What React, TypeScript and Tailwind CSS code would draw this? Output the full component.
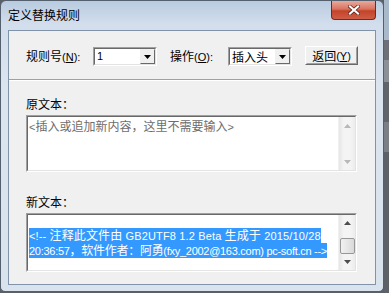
import React from "react";

const CJK = /([\u2e80-\u9fff\u3000-\u303f\uff00-\uffef]+)/;

function T({ s }: { s: string }) {
  return (
    <>
      {s.split(CJK).map((p, i) =>
        CJK.test(p) ? (
          <span key={i} className="text-[12px] font-['Noto_Sans_CJK_SC',sans-serif]">
            {p}
          </span>
        ) : (
          <React.Fragment key={i}>{p}</React.Fragment>
        )
      )}
    </>
  );
}

function Arrow({ up, color }: { up?: boolean; color: string }) {
  return (
    <svg width="7" height="4" viewBox="0 0 7 4">
      {up ? <polygon points="0,4 3.5,0 7,4" fill={color} /> : <polygon points="0,0 7,0 3.5,4" fill={color} />}
    </svg>
  );
}

function ScrollBar({ enabled, h }: { enabled: boolean; h: number }) {
  const c = enabled ? "#4d4d4d" : "#b8b8b8";
  return (
    <div className="w-[17px] shrink-0 flex flex-col items-center bg-[linear-gradient(90deg,#e6e6e6,#f4f4f4_30%,#f4f4f4_70%,#ececec)] border-l border-[#f0f0f0]" style={{ height: h }}>
      <div className="h-[17px] flex items-center justify-center">
        <Arrow up color={c} />
      </div>
      <div className="flex-1 w-full flex justify-center">
        {enabled && (
          <div className="w-[15px] h-[16px] mt-[6px] rounded-[2px] border border-[#979797] bg-[linear-gradient(90deg,#f1f1f1,#e6e6e6_50%,#d9d9d9)]" />
        )}
      </div>
      <div className="h-[17px] flex items-center justify-center">
        <Arrow color={c} />
      </div>
    </div>
  );
}

function Sunken({ className, children }: { className?: string; children: React.ReactNode }) {
  return (
    <div className={"border border-t-[#a0a0a0] border-l-[#a0a0a0] border-r-white border-b-white " + (className || "")}>
      <div className="w-full h-full border border-t-[#696969] border-l-[#696969] border-r-[#e3e3e3] border-b-[#e3e3e3] bg-white flex overflow-hidden">
        {children}
      </div>
    </div>
  );
}

function Combo({ text }: { text: string }) {
  return (
    <Sunken className="w-[64px] h-[19px]">
      <div className="flex-1 pl-[2px] leading-[15px] text-black">
        <T s={text} />
      </div>
      <div className="w-[15px] h-full border border-t-[#f0f0f0] border-l-[#f0f0f0] border-r-[#696969] border-b-[#696969] bg-[#f0f0f0] flex items-center justify-center">
        <Arrow color="#000" />
      </div>
    </Sunken>
  );
}

export default function App() {
  return (
    <div className="w-[389px] h-[293px] flex bg-[#5b6068] font-['Liberation_Sans','Noto_Sans_CJK_SC',sans-serif] text-[11px] text-black overflow-hidden">
      <div className="w-[384px] h-[292px] flex flex-col rounded-t-[6px] rounded-b-[5px] border border-[#55606e] bg-[linear-gradient(180deg,#b9cbe0_0%,#d2deec_8%,#dbe5f0_30%,#d9e3ee_100%)]">
        <div className="h-[29px] flex items-start justify-between pl-[7px] pr-[7px]">
          <div className="mt-[6px] text-[12px] leading-[16px] text-black font-['Noto_Sans_CJK_SC',sans-serif]">定义替换规则</div>
          <div className="w-[45px] h-[19px] rounded-b-[4px] border border-t-0 border-[#6b2b22] bg-[linear-gradient(180deg,#e9a99b_0%,#d8735f_45%,#c4432a_55%,#cf5d45_100%)] flex items-center justify-center">
            <svg width="12" height="10" viewBox="0 0 12 10">
              <path d="M2 1.5 L10 8.5 M10 1.5 L2 8.5" stroke="#5a1d14" strokeWidth="3.6" strokeLinecap="square" />
              <path d="M2 1.5 L10 8.5 M10 1.5 L2 8.5" stroke="#ffffff" strokeWidth="2.2" strokeLinecap="square" />
            </svg>
          </div>
        </div>
        <div className="ml-[7px] w-[368px] h-[255px] bg-[#f0f0f0] border border-[#8193a8] flex flex-col">
          <div className="h-[49px] border-b border-[#a0a0a0] flex items-center pl-[17px] pt-[3px]">
            <div className="w-[67px] leading-[14px]">
              <T s="规则号(" />
              <span className="underline">N</span>
              <T s="):" />
            </div>
            <Combo text="1" />
            <div className="ml-[13px] w-[58px] leading-[14px]">
              <T s="操作(" />
              <span className="underline">O</span>
              <T s="):" />
            </div>
            <Combo text="插入头" />
            <div className="ml-[13px] mb-[2px] w-[53px] h-[19px] border border-t-white border-l-white border-r-[#696969] border-b-[#696969]">
              <div className="w-full h-full border border-t-[#f0f0f0] border-l-[#f0f0f0] border-r-[#a0a0a0] border-b-[#a0a0a0] bg-[#f0f0f0] flex items-center justify-center leading-[14px]">
                <T s="返回(" />
                <span className="underline">Y</span>
                <T s=")" />
              </div>
            </div>
          </div>
          <div className="flex flex-col pl-[17px] border-t border-white">
            <div className="mt-[16px] leading-[14px]">
              <T s="原文本：" />
            </div>
            <Sunken className="mt-[3px] w-[331px] h-[57px]">
              <div className="flex-1 pl-[1px] pt-[2px] leading-[13px] text-[#6d6d6d]">
                <T s="<插入或追加新内容，这里不需要输入>" />
              </div>
              <ScrollBar enabled={false} h={53} />
            </Sunken>
            <div className="mt-[23px] leading-[14px]">
              <T s="新文本：" />
            </div>
            <Sunken className="mt-[3px] w-[331px] h-[59px]">
              <div className="flex-1 min-w-0 pl-[1px] pt-[13px] leading-[13px] text-white flex flex-col items-start">
                <div className="bg-[#3399ff] whitespace-nowrap tracking-[0.14px]">
                  <T s="<!-- 注释此文件由 GB2UTF8 1.2 Beta 生成于 2015/10/28" />
                </div>
                <div className="bg-[#3399ff] whitespace-nowrap tracking-[-0.28px]">
                  <T s="20:36:57，软件作者：阿勇(fxy_2002@163.com) pc-soft.cn -->" />
                </div>
              </div>
              <ScrollBar enabled h={55} />
            </Sunken>
          </div>
        </div>
      </div>
      <div className="flex-1 flex flex-col">
        <div className="h-[40px] bg-[#aab9c9]" />
        <div className="h-[20px] bg-[#6d7078]" />
        <div className="h-[22px] bg-[#8c9097]" />
        <div className="h-[40px] bg-[#60646b]" />
        <div className="h-[30px] bg-[#7b7f86]" />
        <div className="flex-1 bg-[#5d6168]" />
      </div>
    </div>
  );
}
